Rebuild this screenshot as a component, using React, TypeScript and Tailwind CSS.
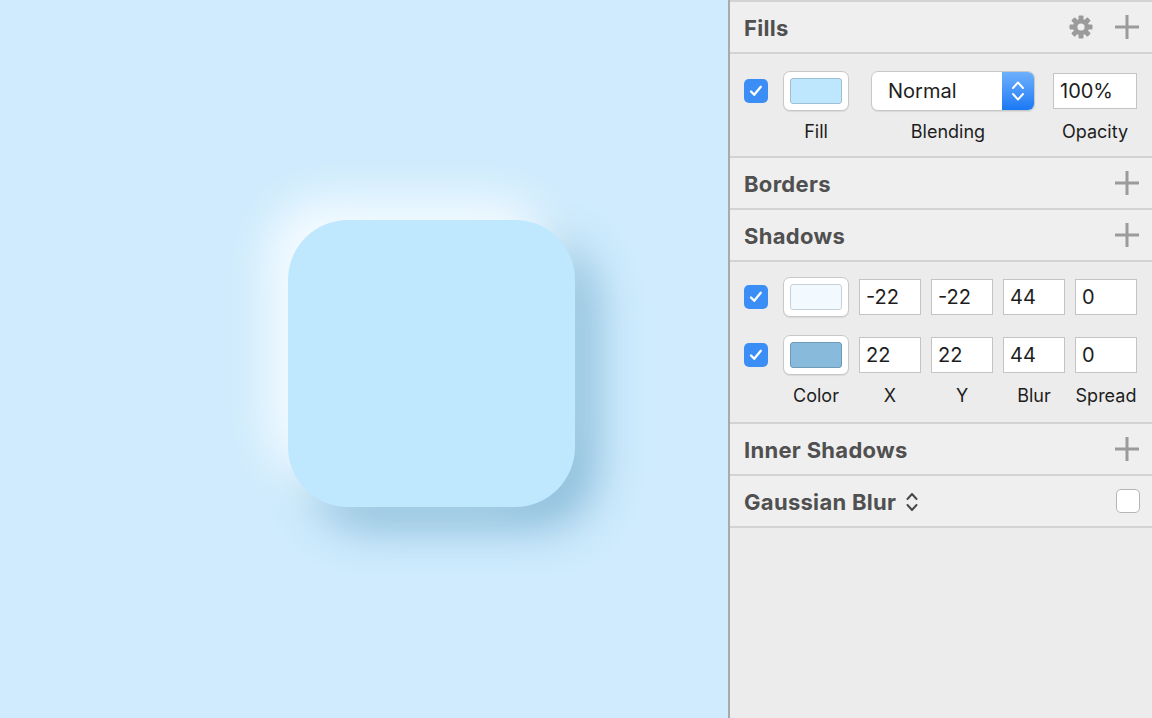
import React from "react";

const font = { fontFamily: "Inter, 'Liberation Sans', sans-serif" };

const Plus = () => (
  <svg width="26" height="26" viewBox="0 0 26 26" className="shrink-0">
    <path d="M13 1v24M1 13h24" stroke="#9b9b9b" strokeWidth="3" />
  </svg>
);

const Gear = () => (
  <svg width="26" height="26" viewBox="0 0 26 26" className="shrink-0">
    {[0, 45, 90, 135].map((r) => (
      <rect key={r} x="10.5" y="1.5" width="5" height="23" rx="1" fill="#9b9b9b" transform={`rotate(${r} 13 13)`} />
    ))}
    <circle cx="13" cy="13" r="8" fill="#9b9b9b" />
    <circle cx="13" cy="13" r="3.6" fill="#efefef" />
  </svg>
);

const Check = () => (
  <div className="w-6 h-6 rounded-[5px] bg-[#3b8ef5] flex items-center justify-center shrink-0">
    <svg width="18" height="18" viewBox="0 0 18 18">
      <path d="M4 9.5l3.2 3.3 6.6-8" stroke="white" strokeWidth="2.3" fill="none" strokeLinecap="round" strokeLinejoin="round" />
    </svg>
  </div>
);

const Well = ({ color, edge }: { color: string; edge: string }) => (
  <div className="w-[66px] h-10 bg-white rounded-[7px] border border-[#c9c9c9] flex items-center justify-center shrink-0 shadow-[0_1px_1px_rgba(0,0,0,0.08)]">
    <div className="w-[52px] h-[26px] rounded-[3px] border" style={{ background: color, borderColor: edge }} />
  </div>
);

const Field = ({ value, w = "w-[62px]" }: { value: string; w?: string }) => (
  <div className={`${w} h-9 bg-white border border-[#c4c4c4] flex items-center pl-[6px] text-[20px] text-[#1d1d1d] shrink-0`}>
    {value}
  </div>
);

const Header = ({ title, children }: { title: React.ReactNode; children?: React.ReactNode }) => (
  <div className="h-[52px] bg-[#efefef] flex items-center pl-[14px] pr-[12px] border-b-2 border-[#d3d3d3]">
    <div className="flex-1 flex items-center pt-[2px] text-[22px] font-bold text-[#505050] tracking-[0.3px]">{title}</div>
    {children}
  </div>
);

export default function App() {
  return (
    <div className="flex w-[1152px] h-[718px] overflow-hidden" style={font}>
      <div className="w-[728px] h-full bg-[#cfebfd] pl-[288px] pt-[220px] shrink-0">
        <div className="w-[287px] h-[287px] rounded-[60px] bg-[#bfe7fe] shadow-[-22px_-22px_44px_0_#f4fbff,22px_22px_44px_0_#8cbedb]" />
      </div>
      <div className="w-[2px] h-full bg-[#a9a9a9] shrink-0" />
      <div className="flex-1 h-full bg-[#ececec] flex flex-col border-t-2 border-[#d3d3d3]">
        <Header title="Fills">
          <div className="flex items-center gap-[20px]">
            <Gear />
            <Plus />
          </div>
        </Header>

        <div className="h-[104px] border-b-2 border-[#d3d3d3] pl-[14px] pt-[17px]">
          <div className="flex items-center h-10">
            <Check />
            <div className="ml-[15px]"><Well color="#bee6fd" edge="#9cbfd6" /></div>
            <div className="ml-[22px] w-[164px] h-10 bg-white rounded-[7px] border border-[#c9c9c9] flex overflow-hidden shadow-[0_1px_1px_rgba(0,0,0,0.08)]">
              <div className="flex-1 flex items-center pl-4 text-[20px] text-[#1d1d1d]">Normal</div>
              <div className="w-8 h-full bg-gradient-to-b from-[#6db0fc] to-[#1878f4] flex items-center justify-center">
                <svg width="18" height="28" viewBox="0 0 18 28">
                  <path d="M4 11l5-5.5 5 5.5M4 17l5 5.5 5-5.5" stroke="white" strokeWidth="1.9" fill="none" strokeLinecap="round" strokeLinejoin="round" />
                </svg>
              </div>
            </div>
            <div className="ml-[18px]"><Field value="100%" w="w-[84px]" /></div>
          </div>
          <div className="flex text-[18px] text-[#1d1d1d] mt-[8px] h-6 items-center">
            <div className="ml-[39px] w-[66px] text-center">Fill</div>
            <div className="ml-[22px] w-[154px] text-center">Blending</div>
            <div className="ml-[28px] w-[84px] text-center">Opacity</div>
          </div>
        </div>

        <Header title="Borders"><Plus /></Header>
        <Header title="Shadows"><Plus /></Header>

        <div className="h-[162px] border-b-2 border-[#d3d3d3] pl-[14px] pt-[15px]">
          {[
            { c: "#f3faff", e: "#c6d2da", v: ["-22", "-22", "44", "0"] },
            { c: "#88bbdb", e: "#6e9cb8", v: ["22", "22", "44", "0"] },
          ].map((r, i) => (
            <div key={i} className={`flex items-center h-10 ${i ? "mt-[18px]" : ""}`}>
              <Check />
              <div className="ml-[15px]"><Well color={r.c} edge={r.e} /></div>
              <div className="ml-[10px] flex gap-[10px]">
                {r.v.map((v, j) => <Field key={j} value={v} />)}
              </div>
            </div>
          ))}
          <div className="flex text-[18px] text-[#1d1d1d] mt-[8px] h-6 items-center">
            <div className="ml-[39px] w-[66px] text-center">Color</div>
            <div className="ml-[10px] flex gap-[10px]">
              {["X", "Y", "Blur", "Spread"].map((l) => (
                <div key={l} className="w-[62px] text-center">{l}</div>
              ))}
            </div>
          </div>
        </div>

        <Header title="Inner Shadows"><Plus /></Header>
        <Header
          title={
            <>
              Gaussian Blur
              <svg width="14" height="24" viewBox="0 0 14 24" className="ml-[9px]">
                <path d="M2.5 9l4.5-5 4.5 5M2.5 15l4.5 5 4.5-5" stroke="#4a4a4a" strokeWidth="2" fill="none" strokeLinecap="round" strokeLinejoin="round" />
              </svg>
            </>
          }
        >
          <div className="w-6 h-6 bg-white rounded-[5px] border border-[#b5b5b5]" />
        </Header>
        <div className="flex-1" />
      </div>
    </div>
  );
}
